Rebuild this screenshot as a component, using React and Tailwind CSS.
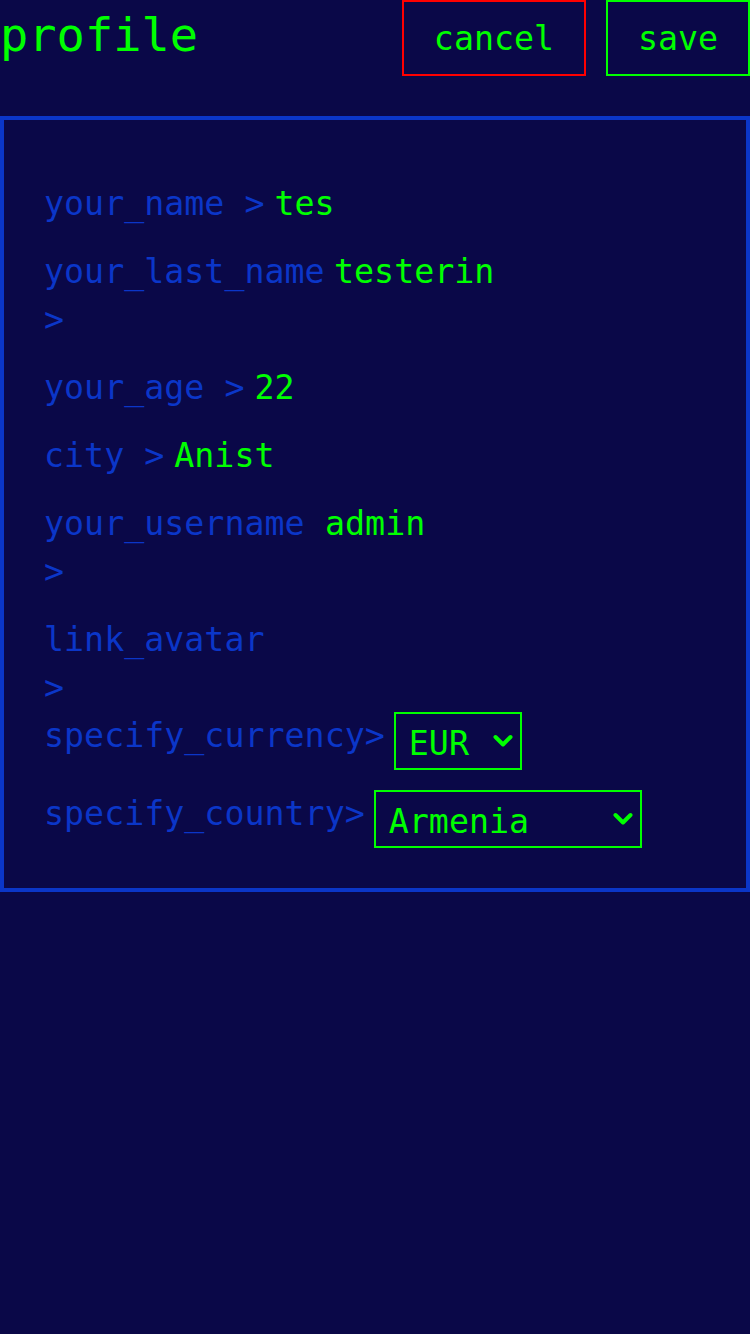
import React from "react";

// ─── Profile form data ───
const FIELDS = [
  { label: "your_name >", value: "tes", max: "max-w-[280px]" },
  { label: "your_last_name >", value: "testerin", max: "max-w-[280px]" },
  { label: "your_age >", value: "22", max: "max-w-[280px]" },
  { label: "city >", value: "Anist", max: "max-w-[280px]" },
  { label: "your_username >", value: "admin", max: "max-w-[271px]" },
  { label: "link_avatar >", value: "", max: "max-w-[230px]" },
];

const Chevron = () => (
  <svg width="20" height="14" viewBox="0 0 20 14" className="shrink-0">
    <polyline
      points="2.5,3 10,10.5 17.5,3"
      fill="none"
      stroke="#00ff00"
      strokeWidth="4"
      strokeLinecap="round"
      strokeLinejoin="round"
    />
  </svg>
);

function FakeSelect({ value, width }) {
  return (
    <div
      className={`${width} h-[58px] border-2 border-[#00ff00] flex items-center justify-between pl-[13px] pr-[7px] pt-[5px] text-[#00ff00]`}
    >
      <span className="leading-[48px]">{value}</span>
      <span className="-mt-[5px]">
        <Chevron />
      </span>
    </div>
  );
}

export default function App() {
  return (
    <div className="min-h-screen w-[750px] bg-[#0a0848] font-['DejaVu_Sans_Mono',monospace] text-[33.3px]">
      {/* Header */}
      <div className="flex items-start justify-between">
        <h1 className="text-[47px] leading-[47px] mt-[11px] text-[#00ff00]">profile</h1>
        <div className="flex gap-5">
          <button className="w-[184px] h-[76px] border-2 border-[#ff0000] text-[#00ff00] flex items-center justify-center pt-[2px]">
            cancel
          </button>
          <button className="w-[144px] h-[76px] border-2 border-[#00ff00] text-[#00ff00] flex items-center justify-center pt-[2px]">
            save
          </button>
        </div>
      </div>

      {/* Form panel */}
      <div className="mt-10 border-4 border-[#0b36c8] px-10 pt-10 pb-10">
        {FIELDS.map((f) => (
          <div key={f.label} className="flex items-start gap-[10px] mt-5">
            <span className={`shrink-0 ${f.max} leading-[48px] text-[#0b36c8]`}>{f.label}</span>
            <span className="leading-[48px] text-[#00ff00]">{f.value}</span>
          </div>
        ))}

        <div className="flex items-start gap-[9px]">
          <span className="shrink-0 leading-[48px] text-[#0b36c8]">specify_currency&gt;</span>
          <FakeSelect value="EUR" width="w-[128px]" />
        </div>

        <div className="flex items-start gap-[9px] mt-5">
          <span className="shrink-0 leading-[48px] text-[#0b36c8]">specify_country&gt;</span>
          <FakeSelect value="Armenia" width="w-[268px]" />
        </div>
      </div>
    </div>
  );
}
